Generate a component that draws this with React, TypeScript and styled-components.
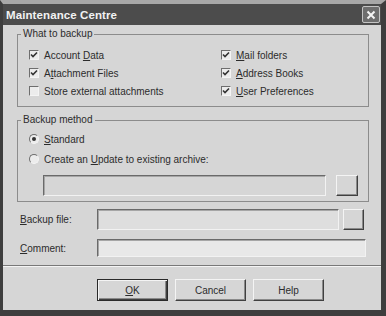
import React from "react";
import styled, { createGlobalStyle } from "styled-components";

const GlobalStyle = createGlobalStyle`
  html, body {
    margin: 0;
    padding: 0;
    background: #d4d4d4;
  }
  * {
    box-sizing: border-box;
  }
`;

const Window = styled.div`
  width: 386px;
  height: 316px;
  display: flex;
  flex-direction: column;
  background: #d6d6d6;
  border-top: 4px solid #a8a8a8;
  border-left: 3px solid #3e3e3e;
  border-right: 5px solid #3e3e3e;
  border-bottom: 6px solid #3e3e3e;
  font-family: "Liberation Sans", Arial, sans-serif;
  font-size: 10px;
  color: #2c2c2c;
`;

const TitleBar = styled.div`
  height: 21px;
  flex-shrink: 0;
  display: flex;
  align-items: center;
  justify-content: space-between;
  padding: 0 1px 0 3px;
  background: #4c4c4c;
`;

const Title = styled.span`
  font-size: 11.5px;
  font-weight: bold;
  color: #f2f2f2;
  letter-spacing: 0.1px;
`;

const CloseButton = styled.button`
  width: 18px;
  height: 17px;
  padding: 0;
  display: flex;
  align-items: center;
  justify-content: center;
  background: #6e6e6e;
  border: 1px solid #c4c4c4;
  border-radius: 2px;
`;

const Body = styled.div`
  display: flex;
  flex-direction: column;
  padding: 3px 12px 0 14px;
`;

const Group = styled.fieldset<{ $gap?: number }>`
  margin: ${(p) => p.$gap ?? 0}px 0 0 0;
  padding: 0;
  border: 1px solid #8c8c8c;
  min-width: 0;
`;

const Legend = styled.legend`
  margin-left: 3px;
  padding: 0 2px;
  line-height: 12px;
  font-size: 10px;
`;

const CheckGrid = styled.div`
  display: grid;
  grid-template-columns: 192px 1fr;
  grid-auto-rows: 18px;
  grid-auto-flow: column;
  grid-template-rows: repeat(3, 18px);
  padding: 6px 0 6px 11px;
`;

const Item = styled.label`
  display: flex;
  align-items: center;
  gap: 5px;
  white-space: nowrap;
`;

const Box = styled.span`
  width: 10px;
  height: 10px;
  flex-shrink: 0;
  display: flex;
  align-items: center;
  justify-content: center;
  background: #ececec;
  border: 1px solid;
  border-color: #6e6e6e #f4f4f4 #f4f4f4 #6e6e6e;
`;

const Radio = styled.span<{ $on?: boolean }>`
  width: 10px;
  height: 10px;
  flex-shrink: 0;
  border-radius: 50%;
  background: #ececec;
  border: 1px solid;
  border-color: #6e6e6e #f4f4f4 #f4f4f4 #6e6e6e;
  display: flex;
  align-items: center;
  justify-content: center;
  &::after {
    content: "";
    width: 4px;
    height: 4px;
    border-radius: 50%;
    background: ${(p) => (p.$on ? "#333" : "transparent")};
  }
`;

const MethodBody = styled.div`
  display: flex;
  flex-direction: column;
  padding: 3px 10px 5px 11px;
`;

const RadioRow = styled(Item)`
  height: 20px;
`;

const FieldRow = styled.div`
  display: flex;
  gap: 10px;
  margin: 6px 0 0 14px;
`;

const Field = styled.div<{ $h?: number; $bg?: string }>`
  flex: 1;
  height: ${(p) => p.$h ?? 21}px;
  background: ${(p) => p.$bg ?? "#d6d6d6"};
  border: 1px solid;
  border-color: #6a6a6a #f2f2f2 #f2f2f2 #6a6a6a;
  box-shadow: inset 1px 1px 0 #a6a6a6;
`;

const BrowseButton = styled.button<{ $w?: number }>`
  width: ${(p) => p.$w ?? 22}px;
  height: 21px;
  padding: 0;
  background: #d6d6d6;
  border: 1px solid;
  border-color: #f4f4f4 #404040 #404040 #f4f4f4;
  box-shadow: inset -1px -1px 0 #8a8a8a;
`;

const FormRow = styled.div<{ $top: number; $right: number }>`
  display: grid;
  grid-template-columns: 80px 1fr;
  align-items: center;
  margin-top: ${(p) => p.$top}px;
  margin-right: ${(p) => p.$right}px;
`;

const FormLabel = styled.span`
  padding-left: 3px;
`;

const FieldGroup = styled.div`
  display: flex;
  gap: 4px;
`;

const Separator = styled.div`
  margin-top: 8px;
  height: 2px;
  border-top: 1px solid #787878;
  border-bottom: 1px solid #f4f4f4;
`;

const ButtonRow = styled.div`
  display: flex;
  gap: 7px;
  padding: 12px 0 0 94px;
`;

const DialogButton = styled.button<{ $default?: boolean }>`
  width: 71px;
  height: 22px;
  padding: 0;
  font-family: "Liberation Sans", Arial, sans-serif;
  font-size: 10px;
  color: #2c2c2c;
  background: #d6d6d6;
  border: 1px solid;
  border-color: ${(p) =>
    p.$default ? "#2a2a2a" : "#f4f4f4 #404040 #404040 #f4f4f4"};
  box-shadow: ${(p) =>
    p.$default
      ? "inset 1px 1px 0 #f4f4f4, inset -1px -1px 0 #404040, inset -2px -2px 0 #8a8a8a"
      : "inset -1px -1px 0 #8a8a8a"};
`;

const Check = () => (
  <svg width="8" height="8" viewBox="0 0 8 8">
    <path d="M1 3.5 L3 5.5 L7 1.5" stroke="#333" strokeWidth="1.6" fill="none" />
  </svg>
);

const CloseIcon = () => (
  <svg width="10" height="10" viewBox="0 0 10 10">
    <path d="M1.5 1.5 L8.5 8.5 M8.5 1.5 L1.5 8.5" stroke="#f4f4f4" strokeWidth="2" />
  </svg>
);

interface CheckItemProps {
  checked?: boolean;
  children: React.ReactNode;
}

const CheckItem = ({ checked, children }: CheckItemProps) => (
  <Item>
    <Box>{checked ? <Check /> : null}</Box>
    <span>{children}</span>
  </Item>
);

function App() {
  return (
    <>
      <GlobalStyle />
      <Window>
        <TitleBar>
          <Title>Maintenance Centre</Title>
          <CloseButton>
            <CloseIcon />
          </CloseButton>
        </TitleBar>
        <Body>
          <Group>
            <Legend>What to backup</Legend>
            <CheckGrid>
              <CheckItem checked>
                Account <u>D</u>ata
              </CheckItem>
              <CheckItem checked>
                A<u>t</u>tachment Files
              </CheckItem>
              <CheckItem>Store external attachments</CheckItem>
              <CheckItem checked>
                <u>M</u>ail folders
              </CheckItem>
              <CheckItem checked>
                <u>A</u>ddress Books
              </CheckItem>
              <CheckItem checked>
                <u>U</u>ser Preferences
              </CheckItem>
            </CheckGrid>
          </Group>
          <Group $gap={7}>
            <Legend>Backup method</Legend>
            <MethodBody>
              <RadioRow>
                <Radio $on />
                <span>
                  <u>S</u>tandard
                </span>
              </RadioRow>
              <RadioRow>
                <Radio />
                <span>
                  Create an <u>U</u>pdate to existing archive:
                </span>
              </RadioRow>
              <FieldRow>
                <Field />
                <BrowseButton />
              </FieldRow>
            </MethodBody>
          </Group>
          <FormRow $top={7} $right={5}>
            <FormLabel>
              <u>B</u>ackup file:
            </FormLabel>
            <FieldGroup>
              <Field $bg="#dedede" />
              <BrowseButton $w={21} />
            </FieldGroup>
          </FormRow>
          <FormRow $top={9} $right={3}>
            <FormLabel>
              <u>C</u>omment:
            </FormLabel>
            <Field $h={18} $bg="#e8e8e8" />
          </FormRow>
        </Body>
        <Separator />
        <ButtonRow>
          <DialogButton $default>
            <u>O</u>K
          </DialogButton>
          <DialogButton>Cancel</DialogButton>
          <DialogButton>Help</DialogButton>
        </ButtonRow>
      </Window>
    </>
  );
}

export default App;
